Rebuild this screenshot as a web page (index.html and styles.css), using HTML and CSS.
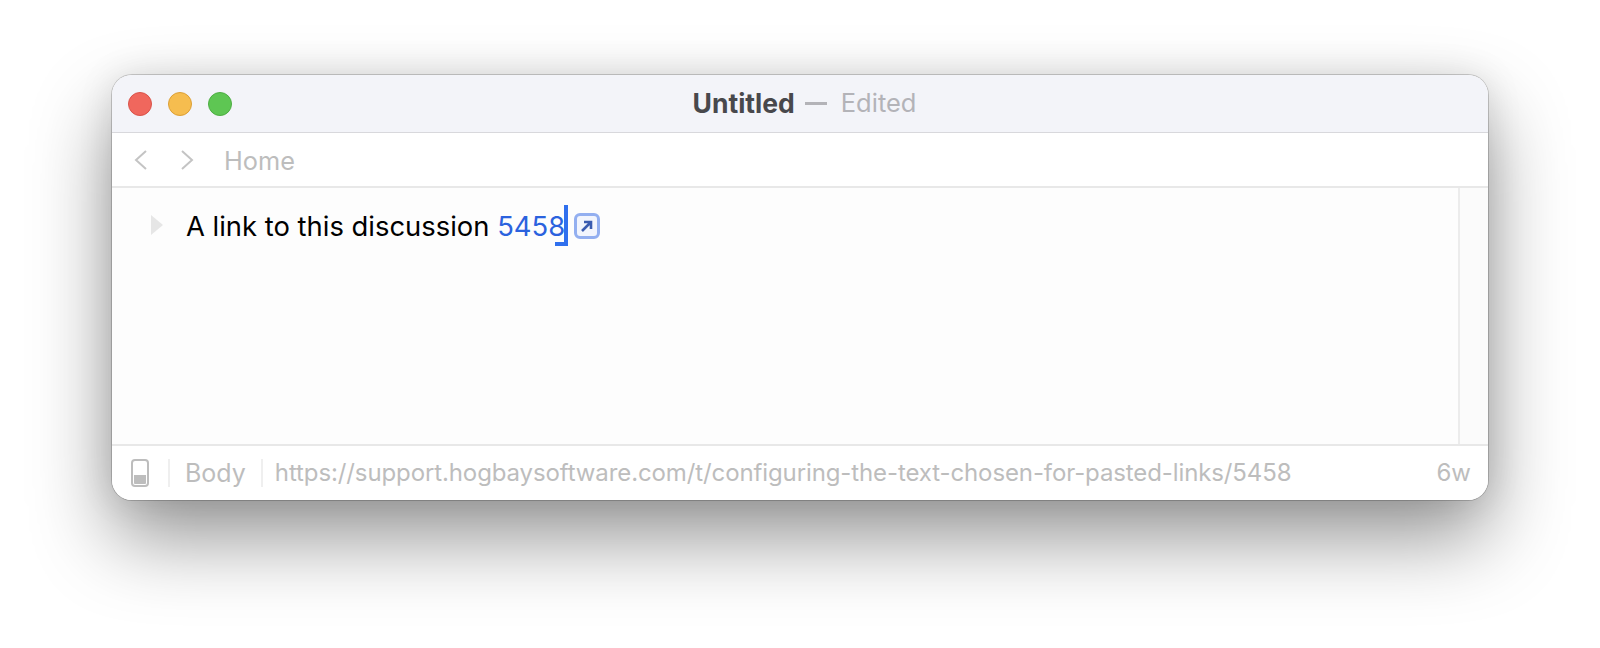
FILE: index.html
```html
<!DOCTYPE html>
<html lang="en">
<head>
    <meta charset="UTF-8">
    <meta name="viewport" content="width=device-width, initial-scale=1.0">
    <title>Untitled - Edited</title>
    <link rel="stylesheet" href="styles.css">
</head>
<body>

    <div class="window">
        <header class="titlebar">
            <div class="lights">
                <span class="light red"></span>
                <span class="light yellow"></span>
                <span class="light green"></span>
            </div>
            <h1 class="title"><b>Untitled</b><i class="dash"></i><span>Edited</span></h1>
        </header>

        <nav class="toolbar">
            <svg class="chevron" width="15" height="22" viewBox="0 0 15 22"><path d="M13 2 L3 11 L13 20"/></svg>
            <svg class="chevron next" width="15" height="22" viewBox="0 0 15 22"><path d="M2 2 L12 11 L2 20"/></svg>
            <span class="crumb">Home</span>
        </nav>

        <main class="content">
            <div class="outline">
                <div class="row">
                    <svg class="handle" width="12" height="20" viewBox="0 0 12 20"><path d="M0 0 L12 10 L0 20 Z"/></svg>
                    <p class="text">A link to this discussion <a href="#" class="link">5458</a><span class="caret"></span><span class="open-link"><svg width="26" height="26" viewBox="0 0 26 26"><rect x="1.5" y="1.5" width="23" height="23" rx="4.5"/><path d="M8 18 L16.5 9.5 M10 9 H17 V16"/></svg></span></p>
                </div>
            </div>
            <div class="gutter"></div>
        </main>

        <footer class="statusbar">
            <svg class="doc-icon" width="18" height="28" viewBox="0 0 18 28"><rect x="1" y="1" width="16" height="26" rx="3"/><path class="fill" d="M3 16 H15 V24 a1 1 0 0 1 -1 1 H4 a1 1 0 0 1 -1 -1 Z"/></svg>
            <span class="style-name">Body</span>
            <span class="url">https://support.hogbaysoftware.com/t/configuring-the-text-chosen-for-pasted-links/5458</span>
            <span class="age">6w</span>
        </footer>
    </div>

</body>
</html>
```

FILE: styles.css
```css
body {
    font-family: Inter, "Liberation Sans", sans-serif;
    margin: 0;
    padding: 75px 112px 0 112px;
    height: 648px;
    box-sizing: border-box;
    background-color: #fff;
    overflow: hidden;
}

.window {
    height: 425px;
    box-sizing: border-box;
    display: flex;
    flex-direction: column;
    background-color: #fff;
    border-radius: 20px;
    overflow: hidden;
    box-shadow: 0 0 0 1px rgba(0, 0, 0, 0.18), 0 38px 80px rgba(0, 0, 0, 0.42), 0 0 36px rgba(0, 0, 0, 0.1);
}

.titlebar {
    height: 58px;
    flex: none;
    box-sizing: border-box;
    display: flex;
    align-items: center;
    justify-content: center;
    position: relative;
    padding: 0 0 2px 9px;
    background-color: #f3f4f9;
    border-bottom: 1px solid #d8d8dc;
}

.lights {
    position: absolute;
    left: 16px;
    top: 17px;
    display: flex;
    gap: 16px;
}

.light {
    width: 24px;
    height: 24px;
    box-sizing: border-box;
    border-radius: 50%;
    border: 1px solid;
}

.red {
    background-color: #f0675d;
    border-color: #d9534a;
}

.yellow {
    background-color: #f6bd4f;
    border-color: #dc9f36;
}

.green {
    background-color: #5ec653;
    border-color: #4dad43;
}

.title {
    margin: 0;
    display: flex;
    align-items: center;
    font-size: 25.5px;
    font-weight: 400;
    color: #b3b3b8;
}

.title b {
    font-size: 26.5px;
    color: #48484c;
    font-weight: 700;
}

.dash {
    width: 22px;
    height: 3px;
    margin: 2px 14px 0 10px;
    background-color: #b3b3b8;
}

.toolbar {
    height: 55px;
    flex: none;
    box-sizing: border-box;
    display: flex;
    align-items: center;
    padding: 0 0 0 21px;
    background-color: #fff;
    border-bottom: 2px solid #e8e8e8;
}

.chevron {
    fill: none;
    stroke: #c4c4c4;
    stroke-width: 2;
}

.chevron.next {
    margin-left: 32px;
}

.crumb {
    margin: 2px 0 0 29px;
    font-size: 25.3px;
    color: #bdbdbd;
}

.content {
    flex: 1;
    display: flex;
    background-color: #fdfdfd;
}

.outline {
    flex: 1;
}

.gutter {
    width: 30px;
    box-sizing: border-box;
    background-color: #fbfbfb;
    border-left: 2px solid #ececec;
}

.row {
    display: flex;
    align-items: center;
    padding: 17px 0 0 39px;
}

.handle {
    fill: #e6e6e6;
    margin-top: -2px;
}

.text {
    margin: 0 0 0 23px;
    display: flex;
    align-items: center;
    font-size: 27.4px;
    white-space: pre;
    color: #000;
}

.link {
    color: #2b62de;
    text-decoration: none;
}

.caret {
    width: 4px;
    height: 41px;
    margin-top: 0;
    margin-left: -1px;
    background-color: #3070ee;
    position: relative;
}

.caret::after {
    content: "";
    position: absolute;
    right: 0;
    bottom: 0;
    width: 13px;
    height: 4px;
    background-color: #3070ee;
}

.open-link {
    display: flex;
    margin-left: 6px;
}

.open-link rect {
    fill: #f2f5fd;
    stroke: #93aff0;
    stroke-width: 3;
}

.open-link path {
    fill: none;
    stroke: #3a5cb0;
    stroke-width: 2.6;
}

.statusbar {
    height: 56px;
    flex: none;
    box-sizing: border-box;
    display: flex;
    align-items: center;
    padding: 0 17px 1px 19px;
    background-color: #fff;
    border-top: 2px solid #e8e8e8;
    font-size: 24px;
    color: #bdbdbd;
}

.doc-icon rect {
    fill: none;
    stroke: #bdbdbd;
    stroke-width: 2;
}

.doc-icon .fill {
    fill: #bdbdbd;
}

.style-name {
    margin-left: 19px;
    padding: 0 15px;
    border-left: 2px solid #efefef;
    border-right: 2px solid #efefef;
    font-size: 25px;
    line-height: 28px;
}

.url {
    margin-left: 12px;
    flex: 1;
    white-space: nowrap;
    letter-spacing: -0.11px;
}
```
